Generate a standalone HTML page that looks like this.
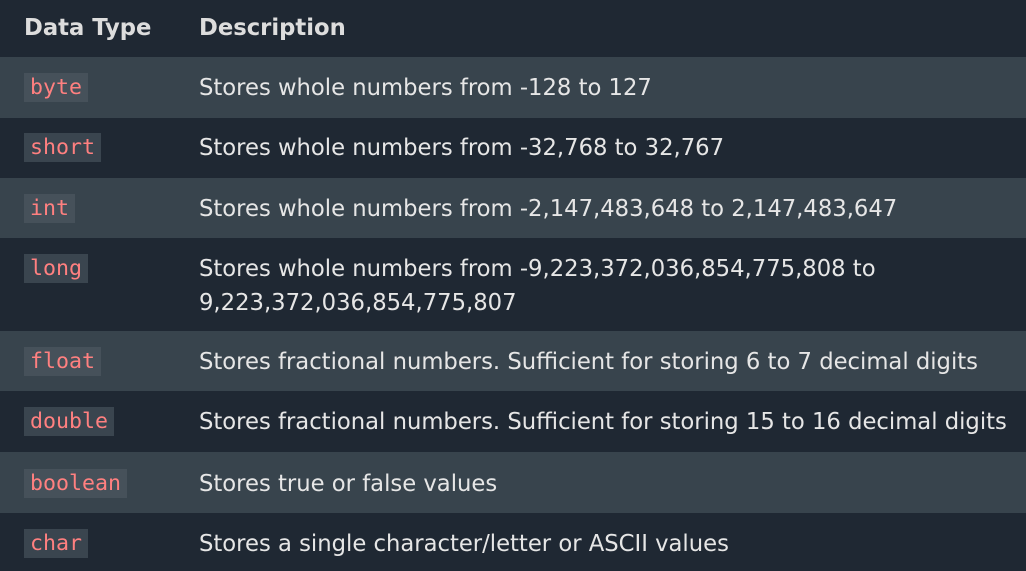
<!DOCTYPE html><html><head><style>
body{margin:0;width:1026px;height:571px;overflow:hidden;background:#1f2833;font-family:"DejaVu Sans",Verdana,sans-serif;color:#e6e6e6;font-size:22.7px}
.r{position:absolute;left:0;width:1026px}
.r .a{position:absolute;left:24px}
.r .b{position:absolute;left:199px;line-height:34px;white-space:nowrap}
.h{font-weight:bold;color:#ddd}
code{font-family:"DejaVu Sans Mono","Liberation Mono",monospace;font-size:21.6px;color:#ff8080;background:#3a454f;padding:1px 6px;line-height:27px;display:inline-block}
.l{background:#38444d}
.l code{background:#46515a}
</style></head><body>
<div class="r h" style="top:0;height:57px"><div class="a" style="top:15px">Data Type</div><div class="b" style="top:11px;left:199px">Description</div></div>
<div class="r l" style="top:57px;height:61px"><div class="a" style="top:16px"><code>byte</code></div><div class="b" style="top:14px">Stores whole numbers from -128 to 127</div></div>
<div class="r" style="top:118px;height:60px"><div class="a" style="top:15px"><code>short</code></div><div class="b" style="top:13px">Stores whole numbers from -32,768 to 32,767</div></div>
<div class="r l" style="top:178px;height:60px"><div class="a" style="top:16px"><code>int</code></div><div class="b" style="top:14px">Stores whole numbers from -2,147,483,648 to 2,147,483,647</div></div>
<div class="r" style="top:238px;height:93px"><div class="a" style="top:16px"><code>long</code></div><div class="b" style="top:14px">Stores whole numbers from -9,223,372,036,854,775,808 to<br>9,223,372,036,854,775,807</div></div>
<div class="r l" style="top:331px;height:60px"><div class="a" style="top:16px"><code>float</code></div><div class="b" style="top:14px">Stores fractional numbers. Sufficient for storing 6 to 7 decimal digits</div></div>
<div class="r" style="top:391px;height:61px"><div class="a" style="top:16px"><code>double</code></div><div class="b" style="top:14px">Stores fractional numbers. Sufficient for storing 15 to 16 decimal digits</div></div>
<div class="r l" style="top:452px;height:61px"><div class="a" style="top:17px"><code>boolean</code></div><div class="b" style="top:15px">Stores true or false values</div></div>
<div class="r" style="top:513px;height:58px"><div class="a" style="top:16px"><code>char</code></div><div class="b" style="top:14px">Stores a single character/letter or ASCII values</div></div>
</body></html>
